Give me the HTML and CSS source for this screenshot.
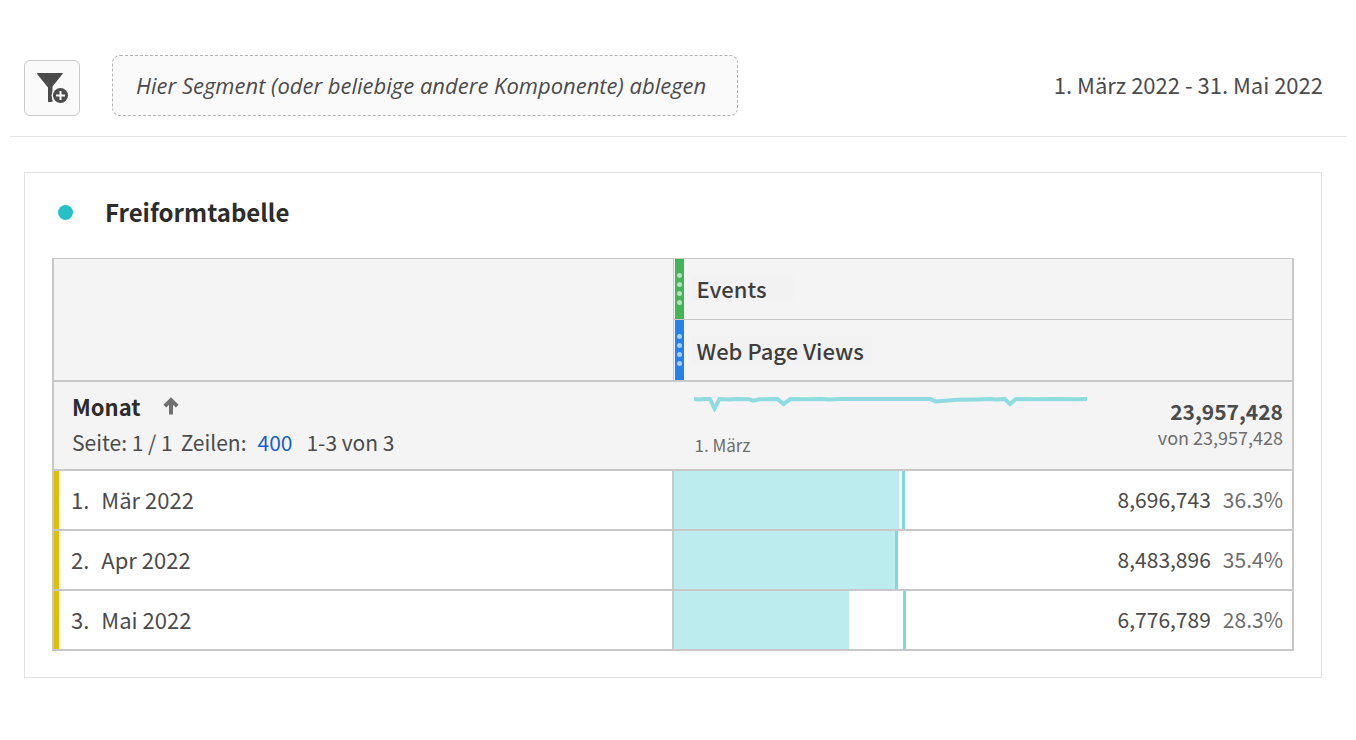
FILE: index.html
```html
<!DOCTYPE html>
<html lang="de">
<head>
<meta charset="utf-8">
<meta name="viewport" content="width=device-width, initial-scale=1">
<title>Freiformtabelle</title>
<link rel="stylesheet" href="styles.css">
</head>
<body>
<header class="toolbar">
  <button class="filter-button" type="button" aria-label="Segment hinzufügen">
    <svg width="32" height="32" viewBox="0 0 32 32" aria-hidden="true">
      <path class="icon-fill" d="M1 1.500Q1 1 1.600 1H26.400Q27 1 26.700 1.700L16.500 14.500V29.500L15 30H12.500Q12 30 12 29.300V15.500L1.300 2.200Z"/>
      <circle class="icon-gap" cx="24.500" cy="23.500" r="9"/>
      <circle class="icon-fill" cx="24.500" cy="23.500" r="7.500"/>
      <path class="icon-plus" d="M24.500 19v9M20 23.500h9"/>
    </svg>
  </button>
  <div class="dropzone">Hier Segment (oder beliebige andere Komponente) ablegen</div>
  <button class="date-range" type="button">1. März 2022 - 31. Mai 2022</button>
</header>
<main class="panel">
  <div class="panel-head">
    <span class="status-dot"></span>
    <h2 class="panel-title">Freiformtabelle</h2>
  </div>
  <table class="freeform">
    <thead>
      <tr class="metric-row">
        <td class="corner" rowspan="2"></td>
        <th class="metric metric-first" scope="col">
          <div class="metric-box">
            <span class="handle handle-green"><i></i><i></i><i></i><i></i></span>
            <span class="metric-name metric-name-wide">Events</span>
          </div>
        </th>
      </tr>
      <tr class="metric-row">
        <th class="metric" scope="col">
          <div class="metric-box">
            <span class="handle handle-blue"><i></i><i></i><i></i><i></i></span>
            <span class="metric-name">Web Page Views</span>
          </div>
        </th>
      </tr>
      <tr class="summary-row">
        <th class="dimension" scope="col">
          <div class="dimension-head">
            <span>Monat</span>
            <button class="sort" type="button" aria-label="Aufsteigend sortiert">
              <svg width="16" height="18" viewBox="0 0 16 18" aria-hidden="true"><path d="M8 17.500V3M1.800 9.200L8 3l6.200 6.200"/></svg>
            </button>
          </div>
          <div class="paging"><span>Seite: 1 / 1</span><span>Zeilen:</span><a class="rows-link" href="#zeilen">400</a><span>1-3 von 3</span></div>
        </th>
        <td class="summary">
          <div class="summary-box">
            <div class="trend">
              <svg width="393" height="20" viewBox="0 0 393 20" aria-hidden="true"><path d="M0 7l5 .4 6-.5 5 .1 4.500 9.500 5-9.500 9 .4 9-.4 11 .2 5 1.500 6-1.500 18-.2 6 5 7-5 16 .2 14-.3 9 .5 12-.4 89 .1 5 2.400 22-1.800 19-.3 14-.5 6 .5 8-.5 5.500 5.100 6-5.100 22 .4 20-.3 17 .3 14-.4h7"/></svg>
              <span>1. März</span>
            </div>
            <div class="total">
              <strong>23,957,428</strong>
              <span>von 23,957,428</span>
            </div>
          </div>
        </td>
      </tr>
    </thead>
    <tbody>
      <tr class="data-row">
        <th class="item" scope="row"><div class="item-box"><span>1.</span><span>Mär 2022</span></div></th>
        <td class="value">
          <span class="bar" style="width:36.3%"></span><span class="marker" style="left:36.8%"></span>
          <div class="value-box"><span>8,696,743</span><span class="percent">36.3%</span></div>
        </td>
      </tr>
      <tr class="data-row">
        <th class="item" scope="row"><div class="item-box"><span>2.</span><span>Apr 2022</span></div></th>
        <td class="value">
          <span class="bar" style="width:35.7%"></span><span class="marker" style="left:35.7%"></span>
          <div class="value-box"><span>8,483,896</span><span class="percent">35.4%</span></div>
        </td>
      </tr>
      <tr class="data-row">
        <th class="item" scope="row"><div class="item-box"><span>3.</span><span>Mai 2022</span></div></th>
        <td class="value">
          <span class="bar" style="width:28.3%"></span><span class="marker" style="left:37%"></span>
          <div class="value-box"><span>6,776,789</span><span class="percent">28.3%</span></div>
        </td>
      </tr>
    </tbody>
  </table>
</main>
</body>
</html>
```
FILE: styles.css
```css
* { box-sizing: border-box; }
body {
  margin: 0;
  padding: 55px 9px 24px 10px;
  background: #fff;
  color: #4b4b4b;
  font-family: "Noto Sans CJK SC", "Open Sans", sans-serif;
  font-size: 22px;
  line-height: 32px;
}
button {
  padding: 0;
  border: 0;
  background: none;
  color: inherit;
  font: inherit;
}
.toolbar {
  display: flex;
  align-items: flex-end;
  padding: 0 24px 20px 14px;
  border-bottom: 1px solid #e6e6e6;
}
.filter-button {
  display: flex;
  align-items: center;
  justify-content: center;
  width: 56px;
  height: 56px;
  border: 1px solid #cacaca;
  border-radius: 6px;
  background: #fafafa;
}
.icon-fill { fill: #4b4b4b; }
.icon-gap { fill: #fafafa; }
.icon-plus { fill: none; stroke: #fafafa; stroke-width: 2; }
.dropzone {
  margin-left: 32px;
  padding: 13px 31px 14px 23px;
  border: 1px dashed #b3b3b3;
  border-radius: 8px;
  background: #fafafa;
  font-family: "Open Sans", sans-serif;
  font-style: italic;
}
.date-range {
  margin-left: auto;
  padding-bottom: 16px;
}
.panel {
  margin: 35px 25px 0 14px;
  padding: 23px 27px 26px;
  border: 1px solid #e1e1e1;
}
.panel-head {
  display: flex;
  align-items: center;
  gap: 32px;
  padding: 0 6px;
  margin-bottom: 30px;
}
.status-dot {
  width: 15px;
  height: 15px;
  border-radius: 50%;
  background: #26c0c7;
}
.panel-title {
  margin: 0;
  color: #2c2c2c;
  font-size: 24px;
  font-weight: 700;
}
.freeform {
  width: 100%;
  table-layout: fixed;
  border-spacing: 0;
  border-right: 2px solid #c8c8c8;
}
.freeform th, .freeform td {
  padding: 0;
  text-align: left;
  font-weight: 400;
}
.corner {
  width: 50.2%;
  border: solid #c8c8c8;
  border-width: 1px 1px 2px 2px;
  background: #f4f4f4;
}
.metric {
  border-bottom: 2px solid #c8c8c8;
  background: #f4f4f4;
}
.metric-first {
  border-top: 1px solid #c8c8c8;
  border-bottom-width: 1px;
}
.metric-box {
  display: flex;
  align-items: center;
  height: 60px;
  padding-left: 1px;
  color: #3e3e3e;
  font-weight: 500;
}
.handle {
  display: flex;
  flex-direction: column;
  align-items: center;
  justify-content: center;
  gap: 4px;
  align-self: stretch;
  width: 9px;
  margin-right: 8px;
}
.handle i {
  width: 5px;
  height: 5px;
  border-radius: 50%;
  background: #fff;
  opacity: .6;
}
.handle-green { background: #44b556; }
.handle-blue { background: #2680eb; }
.metric-name {
  padding: 0 8px 0 4px;
  background: #f2f2f2;
  line-height: 28px;
}
.metric-name-wide {
  padding-right: 27px;
  margin-bottom: 3px;
}
.dimension {
  border: solid #c8c8c8;
  border-width: 0 0 2px 2px;
  background: #f4f4f4;
}
.dimension-head {
  display: flex;
  align-items: center;
  gap: 22px;
  padding: 4px 18px 0;
  color: #2c2c2c;
  font-weight: 700;
  line-height: 36px;
}
.sort { display: flex; }
.sort path { fill: none; stroke: #707070; stroke-width: 4; }
.paging {
  display: flex;
  gap: 8px;
  padding: 0 18px 8px;
  font-size: 21px;
  line-height: 36px;
}
.rows-link {
  margin: 0 6px 0 3px;
  color: #1b5fcc;
  text-decoration: none;
}
.summary {
  border-bottom: 2px solid #c8c8c8;
  background: #f4f4f4;
}
.summary-box {
  display: flex;
  justify-content: space-between;
  height: 87px;
  padding: 10px 9px 12px 20px;
  color: #6e6e6e;
  font-size: 18px;
}
.trend {
  display: flex;
  flex-direction: column;
  justify-content: space-between;
  font-size: 17px;
  line-height: 24px;
}
.trend path { fill: none; stroke: #8edcdf; stroke-width: 4; }
.total {
  display: flex;
  flex-direction: column;
  justify-content: center;
  padding-bottom: 2px;
  text-align: right;
  line-height: 26px;
}
.total strong { color: #4b4b4b; font-size: 21px; }
.item {
  border: solid #c8c8c8;
  border-width: 0 2px 2px 2px;
}
.item-box {
  display: flex;
  align-items: center;
  gap: 12px;
  height: 58px;
  padding: 0 0 3px 12px;
  border-left: 5px solid #dfbf00;
}
.value {
  position: relative;
  border-bottom: 2px solid #c8c8c8;
}
.bar, .marker {
  position: absolute;
  top: 0;
  bottom: 0;
}
.bar { left: 0; background: #bcecee; }
.marker { width: 3px; background: #7ed9de; }
.value-box {
  display: flex;
  justify-content: flex-end;
  gap: 12px;
  padding: 0 9px 3px 0;
  font-size: 21px;
}
.percent { color: #6e6e6e; }
```
